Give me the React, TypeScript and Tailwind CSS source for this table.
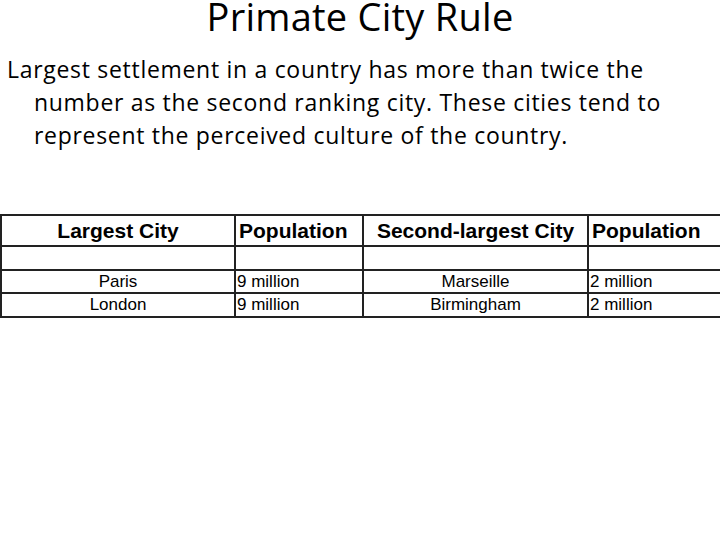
import React from "react";

const rows = [
  { city: "", pop: "", second: "", pop2: "" },
  { city: "Paris", pop: "9 million", second: "Marseille", pop2: "2 million" },
  { city: "London", pop: "9 million", second: "Birmingham", pop2: "2 million" },
];

const cell = "border-2 border-[#222] p-0";

export default function App() {
  return (
    <div className="w-[720px] h-[540px] bg-white text-black overflow-hidden">
      {/* Title */}
      <h1 className="text-center font-['Open_Sans',sans-serif] text-[38px] leading-[32px] tracking-[0.25px]">
        Primate City Rule
      </h1>

      {/* Body */}
      <p className="mt-[21px] pl-[34px] -indent-[27px] font-['Open_Sans',sans-serif] text-[23px] leading-[33px] tracking-[0.7px]">
        Largest settlement in a country has more than twice the
        <br />
        number as the second ranking city. These cities tend to
        <br />
        represent the perceived culture of the country.
      </p>

      {/* Table */}
      <table className="mt-[62px] w-[720px] border-collapse table-fixed font-['Liberation_Sans',Arial,sans-serif]">
        <colgroup>
          <col className="w-[234px]" />
          <col className="w-[128px]" />
          <col className="w-[225px]" />
          <col className="w-[133px]" />
        </colgroup>
        <thead>
          <tr className="h-[31px] text-[21px] leading-[24px] font-bold">
            <th className={`${cell} text-center`}>Largest City</th>
            <th className={`${cell} text-left pl-[3px]`}>Population</th>
            <th className={`${cell} text-center`}>Second-largest City</th>
            <th className={`${cell} text-left pl-[3px]`}>Population</th>
          </tr>
        </thead>
        <tbody>
          {rows.map((r, i) => (
            <tr key={i} className={`${i === 1 ? "h-[23px]" : "h-[24px]"} text-[17px] leading-[20px]`}>
              <td className={`${cell} text-center`}>{r.city}</td>
              <td className={`${cell} text-left pl-[1px]`}>{r.pop}</td>
              <td className={`${cell} text-center`}>{r.second}</td>
              <td className={`${cell} text-left pl-[1px]`}>{r.pop2}</td>
            </tr>
          ))}
        </tbody>
      </table>
    </div>
  );
}
